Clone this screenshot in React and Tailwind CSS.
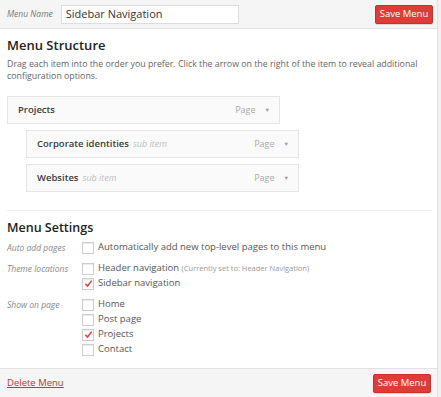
import React from "react";

const font = { fontFamily: '"Open Sans", "Liberation Sans", sans-serif' };

const Check = ({ checked }) => (
  <span className="w-[12px] h-[12px] border border-[#cdcdcd] bg-white shadow-[inset_0_1px_1px_rgba(0,0,0,0.08)] flex items-center justify-center shrink-0">
    {checked && (
      <svg width="9" height="9" viewBox="0 0 10 10">
        <path d="M1.5 5.2 L4 7.8 L8.5 1.8" fill="none" stroke="#d9443a" strokeWidth="1.7" />
      </svg>
    )}
  </span>
);

const Item = ({ title, sub, indent }) => (
  <div
    className={`h-[28px] w-[273px] border border-[#e5e5e5] bg-[#fafafa] flex items-center pl-[10px] pr-[9px] ${
      indent ? "ml-[19px]" : ""
    }`}
  >
    <span className="text-[9.5px] font-semibold text-[#3a3a3a]">{title}</span>
    {sub && <span className="ml-[4px] text-[9px] italic text-[#c0c0c0]">{sub}</span>}
    <span className="ml-auto text-[9px] text-[#aaa]">Page</span>
    <span className="ml-[9px] text-[5.5px] text-[#999]">▼</span>
  </div>
);

const Row = ({ label, children }) => (
  <div className="flex">
    <div className="w-[75px] text-[8.5px] italic text-[#888] leading-[15px]">{label}</div>
    <div className="flex flex-col">{children}</div>
  </div>
);

const Opt = ({ checked, children }) => (
  <label className="flex items-center gap-[4px] h-[15px] text-[9.5px] text-[#555]">
    <Check checked={checked} />
    <span>{children}</span>
  </label>
);

export default function App() {
  return (
    <div className="w-[441px] h-[397px] bg-[#f1f1f1] overflow-hidden" style={font}>
      <div className="w-[438px] h-full bg-white border-r border-[#e2e2e2] flex flex-col">
        <div className="h-[29px] bg-[#f5f5f5] border-b border-[#e2e2e2] flex items-center pl-[7px] pr-[4px]">
          <span className="text-[8.5px] italic text-[#777]">Menu Name</span>
          <div className="ml-[8px] w-[178px] h-[19px] bg-white border border-[#ddd] flex items-center px-[4px] text-[11px] text-[#333]">
            Sidebar Navigation
          </div>
          <button className="ml-auto w-[58px] h-[19px] bg-[#dd3d36] border border-[#c9302a] rounded-[2px] text-white text-[9.5px] shadow-[0_1px_0_rgba(0,0,0,0.12)]">
            Save Menu
          </button>
        </div>

        <div className="flex-1 px-[7px] pt-[8px]">
          <h2 className="text-[13px] font-semibold text-[#222] leading-[16px]">Menu Structure</h2>
          <p className="mt-[5px] text-[8.8px] text-[#666] leading-[12px]">
            Drag each item into the order you prefer. Click the arrow on the right of the item to reveal additional
            configuration options.
          </p>
          <div className="mt-[14px] flex flex-col gap-[6px]">
            <Item title="Projects" />
            <Item title="Corporate identities" sub="sub item" indent />
            <Item title="Websites" sub="sub item" indent />
          </div>
          <div className="mt-[18px] border-t border-[#eee] mr-[-2px]" />
          <h2 className="mt-[9px] text-[12.5px] font-semibold text-[#222] leading-[16px]">Menu Settings</h2>
          <div className="mt-[4px] flex flex-col gap-[6px]">
            <Row label="Auto add pages">
              <Opt>Automatically add new top-level pages to this menu</Opt>
            </Row>
            <Row label="Theme locations">
              <Opt>
                Header navigation <span className="text-[7.5px] text-[#999]">(Currently set to: Header Navigation)</span>
              </Opt>
              <Opt checked>Sidebar navigation</Opt>
            </Row>
            <Row label="Show on page">
              <Opt>Home</Opt>
              <Opt>Post page</Opt>
              <Opt checked>Projects</Opt>
              <Opt>Contact</Opt>
            </Row>
          </div>
        </div>

        <div className="h-[29px] bg-[#f5f5f5] border-t border-[#e2e2e2] flex items-center pl-[7px] pr-[6px]">
          <a className="text-[9.5px] text-[#c0392b] underline">Delete Menu</a>
          <button className="ml-auto w-[58px] h-[19px] bg-[#dd3d36] border border-[#c9302a] rounded-[2px] text-white text-[9.5px] shadow-[0_1px_0_rgba(0,0,0,0.12)]">
            Save Menu
          </button>
        </div>
      </div>
    </div>
  );
}
